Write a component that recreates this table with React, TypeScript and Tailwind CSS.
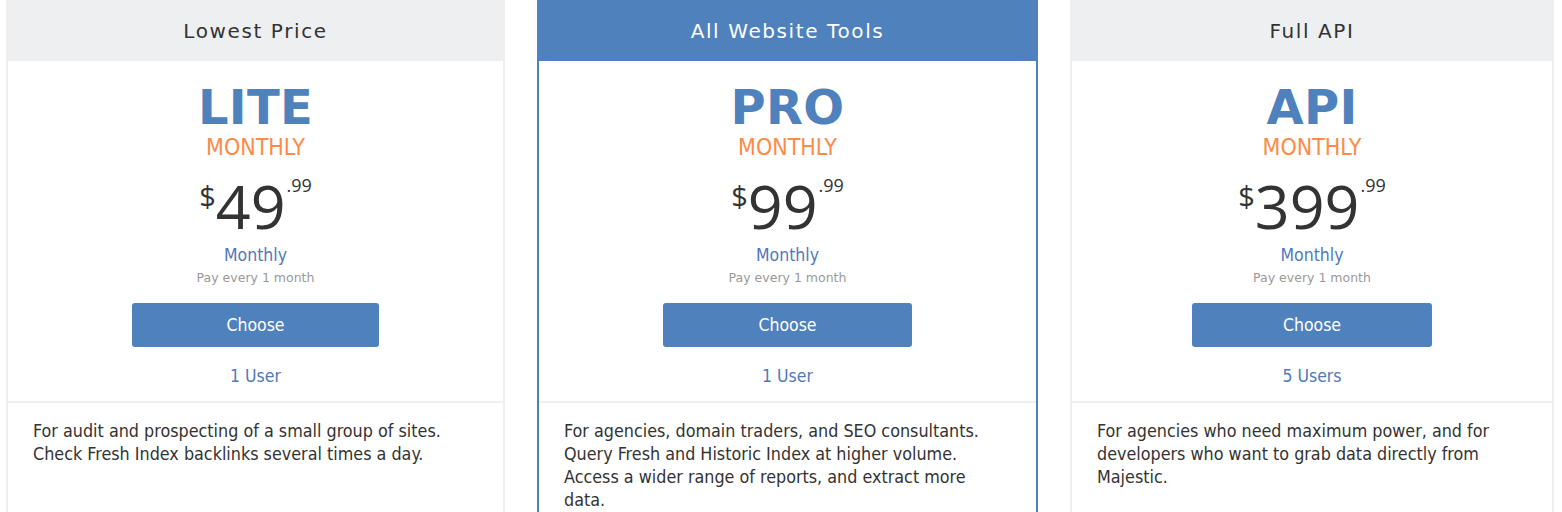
import React from 'react';

type Plan = {
  tag: string;
  name: string;
  price: string;
  users: string;
  desc: string;
  units: string;
  width: string;
  featured?: boolean;
};

const plans: Plan[] = [
  {
    tag: 'Lowest Price',
    name: 'LITE',
    price: '49',
    users: '1 User',
    desc: 'For audit and prospecting of a small group of sites. Check Fresh Index backlinks several times a day.',
    units: '1 million analysis units',
    width: 'w-[499px]',
  },
  {
    tag: 'All Website Tools',
    name: 'PRO',
    price: '99',
    users: '1 User',
    desc: 'For agencies, domain traders, and SEO consultants. Query Fresh and Historic Index at higher volume. Access a wider range of reports, and extract more data.',
    units: '10 million analysis units',
    width: 'w-[501px]',
    featured: true,
  },
  {
    tag: 'Full API',
    name: 'API',
    price: '399',
    users: '5 Users',
    desc: 'For agencies who need maximum power, and for developers who want to grab data directly from Majestic.',
    units: '100 million analysis units',
    width: 'w-[484px]',
  },
];

const cond = "font-['DejaVu_Sans_Condensed','DejaVu_Sans',sans-serif]";

function PlanCard({ p }: { p: Plan }) {
  return (
    <div
      className={`${p.width} shrink-0 flex flex-col border-2 border-t-0 ${
        p.featured ? 'border-[#4f81bd]' : 'border-[#efefef]'
      }`}
    >
      <div
        className={`h-[61px] flex items-center justify-center text-[20px] tracking-[1.6px] font-['DejaVu_Sans',sans-serif] ${
          p.featured ? 'bg-[#4f81bd] text-white' : 'bg-[#eeeff1] text-[#333]'
        }`}
      >
        {p.tag}
      </div>

      <div className="flex flex-col items-center pt-[20px]">
        <div className="text-[48px] leading-[52px] font-bold text-[#4f81bd] tracking-[0.3px] font-['DejaVu_Sans',sans-serif]">
          {p.name}
        </div>
        <div className={`text-[23px] leading-[28px] text-[#fd8b45] ${cond}`}>MONTHLY</div>

        <div className="flex items-start mt-[13px] text-[#333] font-['Open_Sans',sans-serif]">
          <span className="text-[29px] leading-[28px] mt-[8px]">$</span>
          <span className="text-[61px] leading-[66px] -mt-[1px]">{p.price}</span>
          <span className="text-[18px] leading-[18px] mt-[2px] ml-[1px]">.99</span>
        </div>

        <div className={`mt-[5px] text-[17.5px] leading-[22px] text-[#5079b8] ${cond}`}>Monthly</div>
        <div className="text-[12.5px] leading-[24px] text-[#999] font-['DejaVu_Sans',sans-serif]">
          Pay every 1 month
        </div>

        <button className={`mt-[13px] w-1/2 h-[44px] rounded-[3px] bg-[#4f81bd] text-white text-[17.5px] ${cond}`}>
          Choose
        </button>

        <div className={`mt-[18px] mb-[14px] text-[17.5px] leading-[22px] text-[#5079b8] ${cond}`}>{p.users}</div>
      </div>

      <div className="h-[2px] bg-[#efefef]" />

      <div className={`pl-[25px] pr-[36px] pt-[16px] text-[17.8px] leading-[23px] text-[#333] ${cond}`}>
        <p className="min-h-[92px]">{p.desc}</p>
        <p className={`${p.featured ? 'mt-[30px]' : 'mt-[11px]'} text-[#fd8b45]`}>{p.units}</p>
      </div>
    </div>
  );
}

export default function App() {
  return (
    <div className="w-[1562px] h-[512px] overflow-hidden bg-white">
      <div className="flex gap-[32px] pl-[6px]">
        {plans.map((p) => (
          <PlanCard key={p.name} p={p} />
        ))}
      </div>
    </div>
  );
}
